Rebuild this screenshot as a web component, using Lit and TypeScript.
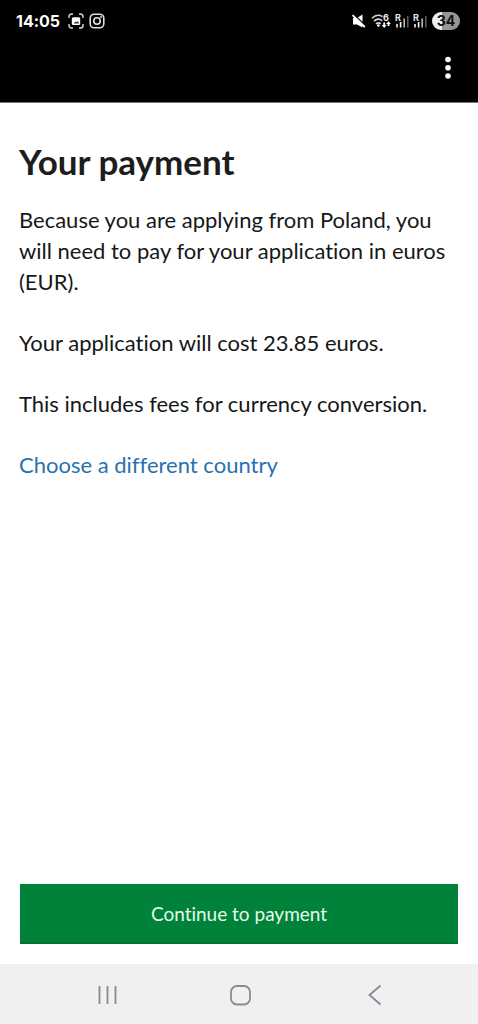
import { LitElement, html, css } from "lit";
import { customElement, property } from "lit/decorators.js";

@customElement("status-bar")
class StatusBar extends LitElement {
  static styles = css`
    :host {
      display: flex;
      align-items: center;
      justify-content: space-between;
      height: 42px;
      padding: 0 18px 0 16px;
      color: #fff;
      font-family: Inter, Roboto, sans-serif;
    }
    .group {
      display: flex;
      align-items: center;
    }
    .time {
      font-size: 16px;
      font-weight: 700;
      line-height: 20px;
      margin-right: 3px;
    }
    .left {
      gap: 5px;
    }
    .right {
      gap: 4px;
    }
    svg {
      display: block;
      overflow: visible;
    }
    .tag {
      font-family: Inter, Roboto, sans-serif;
      font-size: 9px;
      font-weight: 700;
      fill: #e8e8e8;
    }
    .battery {
      width: 28px;
      height: 18px;
      border-radius: 9px;
      margin-left: 1px;
      background: linear-gradient(90deg, #efefef 34%, #969696 34%);
      color: #111;
      font-size: 14px;
      font-weight: 700;
      line-height: 18px;
      text-align: center;
    }
  `;

  private signal() {
    return html`<svg width="14" height="18" viewBox="0 0 14 18" aria-hidden="true">
      <text class="tag" x="0" y="9">R</text>
      <g stroke-width="1.6">
        <path d="M2 15.500v-3.500M5.600 15.500V10" stroke="#f2f2f2" />
        <path d="M9.200 15.500V6.500" stroke="#b8b8b8" />
        <path d="M12.800 15.500V4" stroke="#5c5c5c" />
      </g>
    </svg>`;
  }

  render() {
    return html`
      <div class="group left">
        <span class="time">14:05</span>
        <svg width="16" height="16" viewBox="0 0 16 16" aria-hidden="true">
          <path
            d="M1 5V3.500A2.500 2.500 0 0 1 3.500 1H5M11 1h1.500A2.500 2.500 0 0 1 15 3.500V5M15 11v1.500a2.500 2.500 0 0 1-2.500 2.500H11M5 15H3.500A2.500 2.500 0 0 1 1 12.500V11"
            fill="none" stroke="#ddd" stroke-width="1.400" />
          <rect x="3.800" y="4.200" width="8.400" height="7.800" rx="1.500" fill="#fff" />
          <path d="M5.500 10.500l2-2 1.200.8 1.300-1.400 1 2.600z" fill="#333" />
        </svg>
        <svg width="16" height="16" viewBox="0 0 16 16" aria-hidden="true">
          <g fill="none" stroke="#ddd" stroke-width="1.600">
            <rect x="1.200" y="1.200" width="13.600" height="13.600" rx="4" />
            <circle cx="8" cy="8" r="3.200" />
          </g>
          <circle cx="12" cy="4" r="1" fill="#ddd" />
        </svg>
      </div>
      <div class="group right">
        <svg width="16" height="16" viewBox="0 0 16 16" aria-hidden="true">
          <path d="M2 5h4L11.500 1.500v13L6 11.500H2z" fill="#fff" />
          <path d="M2 .8L15 13" stroke="#000" stroke-width="1.400" />
          <path d="M1.500 2.200L13.800 14" stroke="#fff" stroke-width="1.800" />
        </svg>
        <svg width="20" height="18" viewBox="0 0 20 18" aria-hidden="true">
          <g fill="none" stroke="#d8d8d8" stroke-width="1.600">
            <path d="M1 6.200C4.500 2.800 8.500 2.800 11.500 4.600" />
            <path d="M3 9.200c2.600-2.400 5.800-2.400 8.200-.4" />
            <path d="M5 12c1.600-1.400 3.400-1.400 4.800-.2" />
          </g>
          <circle cx="7.400" cy="13.500" r="1.300" fill="#fff" />
          <text class="tag" x="12" y="9">6</text>
          <path
            d="M12.300 10.500v2.500h-1.500l2.400 3 2.400-3h-1.500v-2.500zM16.600 14v-2h-1.500l2.400-2.800 2.400 2.800h-1.500v2z"
            fill="#fff" />
        </svg>
        ${this.signal()} ${this.signal()}
        <div class="battery">34</div>
      </div>
    `;
  }
}

@customElement("pay-button")
class PayButton extends LitElement {
  @property() label = "";

  static styles = css`
    :host {
      display: block;
    }
    .button {
      display: block;
      width: 100%;
      padding: 15px 10px 14px;
      border: 0;
      border-bottom: 2px solid #02702f;
      border-radius: 0;
      background: #00823b;
      color: #e4fbe9;
      font-family: Lato, "Noto Sans", sans-serif;
      font-size: 19px;
      font-variant-ligatures: none;
      line-height: 29px;
      cursor: pointer;
    }
  `;

  render() {
    return html`<button class="button" type="button">${this.label}</button>`;
  }
}

@customElement("app-root")
class AppRoot extends LitElement {
  static styles = css`
    :host {
      display: flex;
      flex-direction: column;
      min-height: 100vh;
      background: #fff;
      color: #151818;
      font-family: Lato, "Noto Sans", sans-serif;
      font-variant-ligatures: none;
    }
    .top {
      background: #000;
      border-bottom: 1px solid #777;
    }
    .appbar {
      display: flex;
      justify-content: flex-end;
      padding: 8px 18px 18px;
    }
    .icon-button {
      display: block;
      padding: 0;
      border: 0;
      background: none;
      cursor: pointer;
    }
    .icon-button svg {
      display: block;
    }
    .content {
      flex: 1;
      padding: 38px 19px 24px;
    }
    .title {
      margin: 0 0 23px;
      color: #1d1d1d;
      font-size: 35px;
      font-weight: 700;
      line-height: 40px;
    }
    .text {
      margin: 0 0 30px;
      font-size: 22px;
      line-height: 31px;
    }
    .link {
      color: #2672b0;
      text-decoration: none;
    }
    .action {
      padding: 0 20px 20px;
    }
    .nav {
      display: flex;
      justify-content: space-between;
      align-items: center;
      height: 60px;
      padding: 0 20%;
      background: #f0f0f3;
    }
  `;

  render() {
    return html`
      <header class="top">
        <status-bar></status-bar>
        <div class="appbar">
          <button class="icon-button" type="button" aria-label="More options">
            <svg width="24" height="34" viewBox="0 0 24 34">
              <g fill="#fff">
                <circle cx="12" cy="9.500" r="2.800" />
                <circle cx="12" cy="17.800" r="2.800" />
                <circle cx="12" cy="26" r="2.800" />
              </g>
            </svg>
          </button>
        </div>
      </header>
      <main class="content">
        <h1 class="title">Your payment</h1>
        <p class="text">
          Because you are applying from Poland, you will need to pay for your
          application in euros (EUR).
        </p>
        <p class="text">Your application will cost 23.85 euros.</p>
        <p class="text">This includes fees for currency conversion.</p>
        <p class="text"><a class="link" href="#">Choose a different country</a></p>
      </main>
      <div class="action">
        <pay-button label="Continue to payment"></pay-button>
      </div>
      <nav class="nav" aria-label="System">
        <button class="icon-button" type="button" aria-label="Recent apps">
          <svg width="24" height="24" viewBox="0 0 24 24">
            <path d="M3.500 4v18M11.500 4v18M19.500 4v18" stroke="#8a8a8d" stroke-width="1.800" />
          </svg>
        </button>
        <button class="icon-button" type="button" aria-label="Home">
          <svg width="24" height="24" viewBox="0 0 24 24">
            <rect x="4" y="4" width="19" height="18.500" rx="6" fill="none" stroke="#8a8a8d" stroke-width="1.800" />
          </svg>
        </button>
        <button class="icon-button" type="button" aria-label="Back">
          <svg width="24" height="24" viewBox="0 0 24 24">
            <path d="M22.500 3.500L11.500 13l11 9.500" fill="none" stroke="#8a8a8d" stroke-width="1.800" />
          </svg>
        </button>
      </nav>
    `;
  }
}
